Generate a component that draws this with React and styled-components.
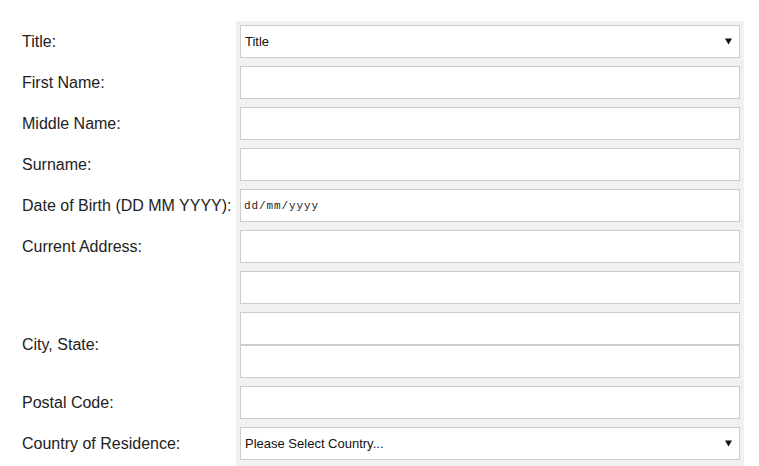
import React from "react";
import styled, { createGlobalStyle } from "styled-components";

const GlobalStyle = createGlobalStyle`
  html, body {
    margin: 0;
    padding: 0;
    background: #ffffff;
    font-family: Arial, "Liberation Sans", sans-serif;
  }
`;

const Page = styled.div`
  padding-top: 21px;
`;

const Form = styled.form`
  display: grid;
  grid-template-columns: 236px 508px;
  align-content: start;
`;

const Label = styled.label`
  display: flex;
  align-items: center;
  padding-left: 22px;
  font-family: "Liberation Sans", Arial, sans-serif;
  font-size: 16px;
  color: #222;
  white-space: nowrap;
`;

const Cell = styled.div`
  display: flex;
  flex-direction: column;
  background: #f1f1f1;
  padding: 4px;
`;

const Filler = styled.div`
  grid-column: 2;
  height: 12px;
  background: #f1f1f1;
`;

const Field = styled.input`
  box-sizing: border-box;
  width: 500px;
  height: 33px;
  margin: 0;
  padding: 0 4px;
  border: 1px solid #cccccc;
  background: #fff;
  font-family: Arial, "Liberation Sans", sans-serif;
  font-size: 12px;
  color: #111;
  outline: none;

  &::placeholder {
    color: #222;
  }
`;

const DateField = styled(Field)`
  padding-left: 3px;
  font-family: "Liberation Mono", "DejaVu Sans Mono", monospace;
  font-size: 11px;
  letter-spacing: 0.9px;
`;

const SelectWrap = styled.div`
  position: relative;
  width: 500px;
  height: 33px;
`;

const Select = styled.select`
  box-sizing: border-box;
  width: 100%;
  height: 100%;
  margin: 0;
  padding: 0 20px 0 4px;
  border: 1px solid #cccccc;
  border-radius: 0;
  background: #fff;
  appearance: none;
  font-family: Arial, "Liberation Sans", sans-serif;
  font-size: 13px;
  color: #111;
  outline: none;
`;

const Arrow = styled.svg`
  position: absolute;
  right: 8px;
  top: 13px;
  pointer-events: none;
`;

const Dropdown = ({ value }) => (
  <SelectWrap>
    <Select defaultValue={value}>
      <option>{value}</option>
    </Select>
    <Arrow width="7" height="7" viewBox="0 0 7 7">
      <path d="M0 0.5 H7 L3.5 6.5 Z" fill="#111" />
    </Arrow>
  </SelectWrap>
);

export default function App() {
  return (
    <>
      <GlobalStyle />
      <Page>
        <Form>
          <Label>Title:</Label>
          <Cell>
            <Dropdown value="Title" />
          </Cell>

          <Label>First Name:</Label>
          <Cell>
            <Field type="text" />
          </Cell>

          <Label>Middle Name:</Label>
          <Cell>
            <Field type="text" />
          </Cell>

          <Label>Surname:</Label>
          <Cell>
            <Field type="text" />
          </Cell>

          <Label>Date of Birth (DD MM YYYY):</Label>
          <Cell>
            <DateField type="text" placeholder="dd/mm/yyyy" />
          </Cell>

          <Label>Current Address:</Label>
          <Cell>
            <Field type="text" />
          </Cell>

          <Label />
          <Cell>
            <Field type="text" />
          </Cell>

          <Label>City, State:</Label>
          <Cell>
            <Field type="text" />
            <Field type="text" />
          </Cell>

          <Label>Postal Code:</Label>
          <Cell>
            <Field type="text" />
          </Cell>

          <Label>Country of Residence:</Label>
          <Cell>
            <Dropdown value="Please Select Country..." />
          </Cell>
          <Filler />
        </Form>
      </Page>
    </>
  );
}
